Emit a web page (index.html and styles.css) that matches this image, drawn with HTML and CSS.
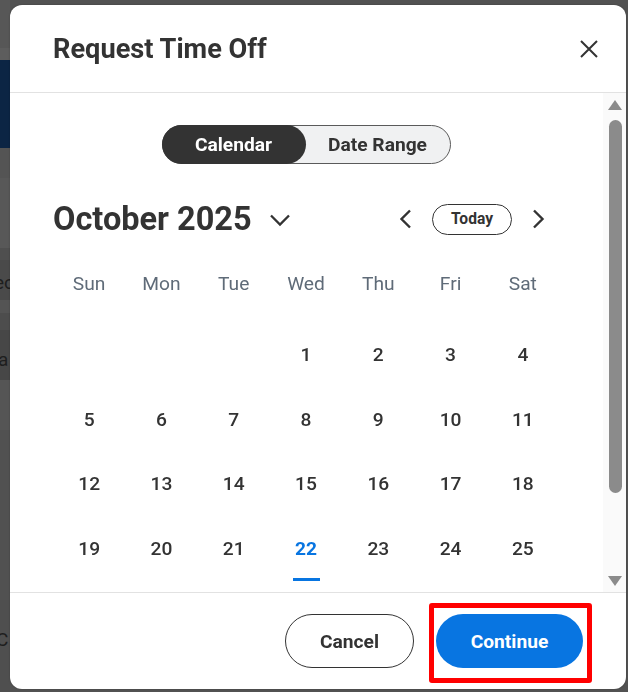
FILE: index.html
```html
<!DOCTYPE html>
<html lang="en">
<head>
<meta charset="utf-8">
<title>Request Time Off</title>
<link rel="stylesheet" href="styles.css">
</head>
<body>
<div class="page">
  <div class="strip">
    <div class="b b1"></div>
    <div class="b b2"></div>
    <div class="b b3"></div>
    <div class="b b4"></div>
    <div class="b b5"></div>
    <div class="b b6"></div>
    <div class="b b7"><span>ec</span></div>
    <div class="b b8"></div>
    <div class="b b9"></div>
    <div class="b b10"><span>a</span></div>
    <div class="b b11"></div>
    <div class="b b12"></div>
    <div class="b b13"><span>C</span></div>
  </div>
</div>

<div class="modal" role="dialog" aria-label="Request Time Off">
  <header class="m-head">
    <h1 class="m-title">Request Time Off</h1>
    <button class="close" aria-label="Close">
      <svg width="20" height="20" viewBox="0 0 20 20"><path d="M2 2 L18 18 M18 2 L2 18" stroke="#333" stroke-width="2" fill="none" stroke-linecap="butt"/></svg>
    </button>
  </header>

  <div class="m-body">
    <div class="content">
      <div class="seg">
        <button class="seg-btn active">Calendar</button>
        <button class="seg-btn">Date Range</button>
      </div>

      <div class="month-row">
        <div class="month-title">
          <span>October 2025</span>
          <svg class="chev-down" width="22" height="14" viewBox="0 0 22 14"><path d="M2 2.5 L11 11.5 L20 2.5" stroke="#333" stroke-width="2.3" fill="none"/></svg>
        </div>
        <div class="nav">
          <svg width="14" height="20" viewBox="0 0 14 20"><path d="M12 1.5 L3.5 10 L12 18.5" stroke="#333" stroke-width="2.4" fill="none"/></svg>
          <button class="today">Today</button>
          <svg width="14" height="20" viewBox="0 0 14 20"><path d="M2 1.5 L10.5 10 L2 18.5" stroke="#333" stroke-width="2.4" fill="none"/></svg>
        </div>
      </div>

      <div class="weekdays">
        <span>Sun</span><span>Mon</span><span>Tue</span><span>Wed</span><span>Thu</span><span>Fri</span><span>Sat</span>
      </div>

      <div class="dates">
        <span></span><span></span><span></span><span>1</span><span>2</span><span>3</span><span>4</span>
        <span>5</span><span>6</span><span>7</span><span>8</span><span>9</span><span>10</span><span>11</span>
        <span>12</span><span>13</span><span>14</span><span>15</span><span>16</span><span>17</span><span>18</span>
        <span>19</span><span>20</span><span>21</span><span class="today-date">22</span><span>23</span><span>24</span><span>25</span>
        <span>26</span><span>27</span><span>28</span><span>29</span><span>30</span><span>31</span><span></span>
      </div>
    </div>

    <div class="scrollbar">
      <span class="arr up"></span>
      <span class="thumb"></span>
      <span class="arr down"></span>
    </div>
  </div>

  <footer class="m-foot">
    <button class="btn btn-outline">Cancel</button>
    <div class="highlight-wrap">
      <button class="btn btn-primary">Continue</button>
      <span class="highlight"></span>
    </div>
  </footer>
</div>
</body>
</html>
```

FILE: styles.css
```css
* { box-sizing: border-box; }

html, body {
  margin: 0;
  padding: 0;
  width: 628px;
  height: 692px;
  overflow: hidden;
}

body {
  background: #525252;
  font-family: Roboto, "Liberation Sans", Arial, sans-serif;
  color: #333;
}

button {
  font-family: inherit;
  cursor: pointer;
}

/* ---------- background page (dimmed) ---------- */
.page {
  height: 692px;
}

.strip {
  width: 10px;
  display: flex;
  flex-direction: column;
  overflow: hidden;
}

.b { position: relative; overflow: hidden; }
.b span {
  display: block;
  font-size: 19px;
  color: #1e1e1e;
  line-height: 1;
  margin-left: -6px;
  white-space: nowrap;
}
.b1 { height: 48px; background: #575757; }
.b2 { height: 12px; background: #5d5d5d; }
.b3 { height: 88px; background: #0c2544; }
.b4 { height: 30px; background: #545454; }
.b5 { height: 70px; background: #585858; }
.b6 { height: 12px; background: #4f4f4f; }
.b7 { height: 40px; background: #4a4a4a; padding-top: 13px; }
.b8 { height: 13px; background: #545454; }
.b9 { height: 17px; background: #4d4d4d; }
.b10 { height: 50px; background: #474747; padding-top: 20px; }
.b10 span { margin-left: -2px; }
.b11 { height: 50px; background: #555555; }
.b12 { height: 170px; background: #515151; }
.b13 { height: 92px; background: #4f4f4f; padding-top: 30px; }
.b13 span { margin-left: -4px; }

/* ---------- modal ---------- */
.modal {
  position: fixed;
  left: 10px;
  top: 5px;
  width: 616px;
  height: 684px;
  background: #fff;
  border-radius: 12px;
  display: flex;
  flex-direction: column;
  overflow: hidden;
  box-shadow: 0 0 2px rgba(0,0,0,0.25);
}

.m-head {
  height: 88px;
  flex: none;
  display: flex;
  align-items: center;
  justify-content: space-between;
  padding: 0 27px 0 43px;
  border-bottom: 1px solid #e2e2e2;
}

.m-title {
  margin: 0;
  font-size: 27.2px;
  font-weight: 700;
  color: #333;
  letter-spacing: 0;
}

.close {
  border: 0;
  background: transparent;
  padding: 0;
  width: 20px;
  height: 20px;
  display: flex;
}

/* ---------- body ---------- */
.m-body {
  height: 499px;
  flex: none;
  display: flex;
}

.content {
  flex: 1;
  overflow: hidden;
  padding: 32px 44px 0 43px;
}

.seg {
  width: 289px;
  height: 39px;
  margin: 0 auto;
  display: flex;
  border: 1px solid #5a5a5a;
  border-radius: 20px;
  background: #f0f1f2;
}

.seg-btn {
  flex: 1;
  border: 0;
  background: transparent;
  border-radius: 20px;
  font-size: 19.2px;
  font-weight: 700;
  color: #333;
  padding: 0;
  margin: -1px 0;
}

.seg-btn.active {
  background: #333;
  color: #fff;
  margin-left: -1px;
}

.month-row {
  margin-top: 31px;
  height: 48px;
  display: flex;
  align-items: center;
  justify-content: space-between;
}

.month-title {
  display: flex;
  align-items: center;
  font-size: 32.5px;
  font-weight: 700;
  color: #333;
}

.chev-down {
  margin-left: 17px;
  margin-top: 2px;
}

.nav {
  display: flex;
  align-items: center;
  padding-right: 13px;
}

.today {
  margin: 0 20px 0 20px;
  width: 80px;
  height: 31px;
  border: 1px solid #333;
  border-radius: 16px;
  background: #fff;
  font-size: 15.6px;
  font-weight: 700;
  color: #333;
  padding: 0;
}

.weekdays {
  margin-top: 20px;
  height: 40px;
  display: grid;
  grid-template-columns: repeat(7, 1fr);
  align-items: center;
  text-align: center;
  font-size: 19.2px;
  color: #5f6b78;
}

.dates {
  margin-top: 19px;
  display: grid;
  grid-template-columns: repeat(7, 1fr);
  grid-auto-rows: 64.7px;
  align-items: center;
  text-align: center;
  font-size: 19.2px;
  font-weight: 500;
  color: #333;
}

.dates span {
  position: relative;
  height: 100%;
  display: flex;
  align-items: center;
  justify-content: center;
}

.dates .today-date {
  color: #0875e1;
  font-weight: 700;
}

.dates .today-date::after {
  content: "";
  position: absolute;
  left: 50%;
  bottom: 0;
  width: 27px;
  height: 3px;
  margin-left: -13px;
  background: #0875e1;
}

/* ---------- custom scrollbar ---------- */
.scrollbar {
  width: 23px;
  flex: none;
  background: #fafafa;
  display: flex;
  flex-direction: column;
  align-items: center;
  padding: 7px 0 6px 0;
}

.arr {
  width: 0;
  height: 0;
  border-left: 7px solid transparent;
  border-right: 7px solid transparent;
  margin-left: 1px;
}
.arr.up { border-bottom: 10px solid #8b8b8b; }
.arr.down { border-top: 10px solid #8b8b8b; }

.thumb {
  width: 13px;
  margin-left: 1px;
  height: 373px;
  margin-top: 10px;
  margin-bottom: auto;
  background: #8b8b8b;
  border-radius: 7px;
}

/* ---------- footer ---------- */
.m-foot {
  flex: 1;
  border-top: 1px solid #e2e2e2;
  display: flex;
  align-items: center;
  justify-content: flex-end;
  gap: 22px;
  padding: 0 43px 0 0;
}

.btn {
  height: 54px;
  border-radius: 27px;
  font-size: 19.2px;
  font-weight: 700;
  padding: 0;
}

.btn-outline {
  width: 129px;
  border: 1px solid #333;
  background: #fff;
  color: #333;
}

.btn-primary {
  width: 147px;
  border: 0;
  background: #0875e1;
  color: #fff;
}

.highlight-wrap {
  position: relative;
  display: flex;
}

.highlight {
  position: absolute;
  top: -11px;
  left: -7px;
  right: -9px;
  bottom: -15px;
  border: 5px solid #ff0000;
  border-radius: 3px;
  pointer-events: none;
}
```
